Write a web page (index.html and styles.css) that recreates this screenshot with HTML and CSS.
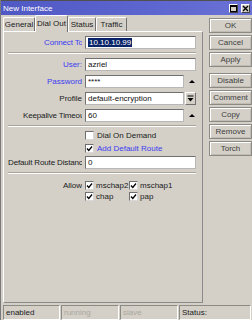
FILE: index.html
```html
<!DOCTYPE html>
<html lang="en">
<head>
    <meta charset="UTF-8">
    <title>New Interface</title>
    <link rel="stylesheet" href="styles.css">
</head>
<body>
    <div class="window">
        <!-- Title bar -->
        <div class="titlebar">
            <span class="title">New Interface</span>
            <span class="tb-btn">
                <svg width="7" height="7" viewBox="0 0 7 7"><rect x="0.5" y="0.5" width="6" height="6" fill="none" stroke="#000"/><line x1="0" y1="1.5" x2="7" y2="1.5" stroke="#000"/></svg>
            </span>
            <span class="tb-btn">
                <svg width="7" height="7" viewBox="0 0 7 7"><path d="M1 1 L6 6 M6 1 L1 6" stroke="#000" stroke-width="1.4"/></svg>
            </span>
        </div>

        <div class="content">
            <div class="main">
                <div class="tabs">
                    <span class="tab tab-general">General</span>
                    <span class="tab tab-dial active">Dial Out</span>
                    <span class="tab tab-status">Status</span>
                    <span class="tab tab-traffic">Traffic</span>
                </div>

                <div class="panel">
                    <div class="row row-first">
                        <span class="lbl blue"><span class="clip clip-connect">Connect To:</span></span>
                        <span class="field"><span class="selected">10.10.10.99</span></span>
                    </div>
                    <div class="sep"></div>

                    <div class="row">
                        <span class="lbl blue">User:</span>
                        <span class="field">azriel</span>
                    </div>
                    <div class="row">
                        <span class="lbl blue">Password</span>
                        <span class="field short">****</span>
                        <span class="arrow-up"></span>
                    </div>
                    <div class="row">
                        <span class="lbl">Profile</span>
                        <span class="field short">default-encryption</span>
                        <span class="drop-btn">
                            <svg width="7" height="7" viewBox="0 0 7 7"><line x1="0.5" y1="1" x2="6.5" y2="1" stroke="#000"/><path d="M0.5 3 L6.5 3 L3.5 6.5 Z" fill="#000"/></svg>
                        </span>
                    </div>
                    <div class="row">
                        <span class="lbl"><span class="clip clip-keepalive">Keepalive Timeout:</span></span>
                        <span class="field short">60</span>
                        <span class="arrow-up"></span>
                    </div>
                    <div class="sep"></div>

                    <div class="check-row">
                        <span class="box"></span>
                        <span>Dial On Demand</span>
                    </div>
                    <div class="check-row">
                        <span class="box checked"></span>
                        <span class="blue">Add Default Route</span>
                    </div>
                    <div class="row row-tight">
                        <span class="lbl"><span class="clip clip-distance">Default Route Distance:</span></span>
                        <span class="field">0</span>
                    </div>
                    <div class="sep"></div>

                    <div class="allow">
                        <span class="lbl">Allow</span>
                        <div class="allow-grid">
                            <span class="opt"><span class="box checked"></span>mschap2</span>
                            <span class="opt"><span class="box checked"></span>mschap1</span>
                            <span class="opt"><span class="box checked"></span>chap</span>
                            <span class="opt"><span class="box checked"></span>pap</span>
                        </div>
                    </div>
                </div>
            </div>

            <!-- Buttons -->
            <div class="side">
                <span class="btn">OK</span>
                <span class="btn">Cancel</span>
                <span class="btn">Apply</span>
                <span class="btn btn-gap">Disable</span>
                <span class="btn">Comment</span>
                <span class="btn">Copy</span>
                <span class="btn">Remove</span>
                <span class="btn">Torch</span>
            </div>
        </div>

        <!-- Status bar -->
        <div class="statusbar">
            <span class="cell cell-enabled">enabled</span>
            <span class="cell cell-running off">running</span>
            <span class="cell cell-slave off">slave</span>
            <span class="cell cell-status">Status:</span>
        </div>
    </div>
</body>
</html>
```

FILE: styles.css
```css
/* Base */
:root {
    --face: #d4d0c8;
    --shadow: #808080;
    --blue: #3c3cf0;
}

html, body {
    margin: 0;
    padding: 0;
}

body {
    font-family: 'Liberation Sans', Arial, sans-serif;
    font-size: 8px;
    color: #202020;
    background: var(--face);
}

.window {
    width: 252px;
    height: 320px;
    box-sizing: border-box;
    border-left: 1px solid #7a7a7a;
    background: var(--face);
    display: flex;
    flex-direction: column;
    overflow: hidden;
}

/* Title bar */
.titlebar {
    height: 15px;
    box-sizing: border-box;
    border-top: 1px solid #505050;
    background: linear-gradient(90deg, #5058c4, #5d66cf 60%, #6a72d6);
    display: flex;
    align-items: center;
    padding: 0 2px 0 2px;
    gap: 3px;
}

.title {
    color: #fff;
    flex: 1;
    line-height: 13px;
}

.tb-btn {
    width: 9px;
    height: 9px;
    box-sizing: border-box;
    background: var(--face);
    border: 1px solid;
    border-color: #fff #404040 #404040 #fff;
    display: flex;
    align-items: center;
    justify-content: center;
}

.tb-btn svg {
    display: block;
}

/* Content */
.content {
    display: flex;
    height: 289px;
}

.main {
    padding: 2px 0 0 2px;
    width: 201px;
}

.tabs {
    display: flex;
    height: 14px;
}

.tab {
    box-sizing: border-box;
    height: 14px;
    border: 1px solid;
    border-color: #fff #707070 transparent #fff;
    border-bottom: none;
    border-radius: 2px 2px 0 0;
    line-height: 13px;
    text-align: center;
    color: #202020;
}

.tab-general { width: 32px; }
.tab-dial { width: 33px; }
.tab-status { width: 28px; }
.tab-traffic { width: 31px; }

.tab.active {
    height: 17px;
    margin-top: -2px;
    line-height: 15px;
    background: var(--face);
    position: relative;
    z-index: 1;
}

.panel {
    height: 272px;
    box-sizing: border-box;
    border: 1px solid;
    border-color: #fff #8a8a8a #8a8a8a #fff;
    padding: 4px 5px 0 4px;
}

/* Form rows */
.row {
    display: flex;
    align-items: center;
    height: 13px;
    margin-top: 4px;
}

.row-first {
    margin-top: 0;
}

.row-tight {
    margin-top: 1px;
}

.lbl {
    width: 74px;
    margin-right: 3px;
    text-align: right;
    white-space: nowrap;
    overflow: hidden;
    flex-shrink: 0;
}

.clip {
    display: inline-block;
    overflow: hidden;
    white-space: nowrap;
    text-align: left;
    vertical-align: top;
    letter-spacing: -0.15px;
}

.clip-connect { width: 38px; }
.clip-keepalive { width: 59px; }
.clip-distance { width: 74px; }

.blue {
    color: var(--blue);
}

.field {
    width: 111px;
    height: 13px;
    box-sizing: border-box;
    background: #fff;
    border: 1px solid;
    border-color: #707070 #b8b8b8 #b8b8b8 #707070;
    padding-left: 2px;
    line-height: 11px;
    white-space: nowrap;
    overflow: hidden;
    color: #101010;
}

.field.short {
    width: 99px;
}

.selected {
    background: #0a246a;
    color: #fff;
    padding: 0 1px;
}

.arrow-up {
    width: 0;
    height: 0;
    margin-left: 5px;
    border-left: 3px solid transparent;
    border-right: 3px solid transparent;
    border-bottom: 3px solid #000;
}

.drop-btn {
    width: 11px;
    height: 13px;
    box-sizing: border-box;
    margin-left: 1px;
    border: 1px solid;
    border-color: #fff #707070 #707070 #fff;
    display: flex;
    align-items: center;
    justify-content: center;
}

.sep {
    height: 0;
    border-top: 1px solid #a8a49c;
    border-bottom: 1px solid #fff;
    margin: 3px 1px 2px 0;
}

/* Checkboxes */
.check-row {
    display: flex;
    align-items: center;
    height: 13px;
    padding-left: 77px;
    gap: 3px;
}

.box {
    width: 9px;
    height: 9px;
    box-sizing: border-box;
    background: #fff;
    border: 1px solid;
    border-color: #707070 #d8d8d8 #d8d8d8 #707070;
    flex-shrink: 0;
}

.box.checked {
    background: #fff url("data:image/svg+xml,%3Csvg xmlns='http://www.w3.org/2000/svg' width='7' height='7'%3E%3Cpath d='M1 3.5 L2.8 5.5 L6 1.5' fill='none' stroke='%23000' stroke-width='1.3'/%3E%3C/svg%3E") no-repeat center;
}

.allow {
    display: flex;
    margin-top: 6px;
}

.allow .lbl {
    line-height: 11px;
}

.allow-grid {
    display: grid;
    grid-template-columns: 44px 50px;
    row-gap: 0;
}

.opt {
    display: flex;
    align-items: center;
    height: 11px;
    gap: 2px;
}

/* Side buttons */
.side {
    display: flex;
    flex-direction: column;
    gap: 2px;
    padding-top: 3px;
    margin-left: 6px;
}

.btn {
    width: 43px;
    height: 15px;
    box-sizing: border-box;
    border: 1px solid #8c8a84;
    box-shadow: inset 1px 1px #fff, inset -1px -1px #c0bcb4;
    text-align: center;
    line-height: 13px;
    color: #404040;
}

.btn-gap {
    margin-top: 4px;
}

/* Status bar */
.statusbar {
    display: flex;
    gap: 1px;
    padding: 1px 1px 0 2px;
}

.cell {
    height: 15px;
    box-sizing: border-box;
    border: 1px solid;
    border-color: #8c8a84 #fff #fff #8c8a84;
    padding-left: 2px;
    line-height: 13px;
}

.cell-enabled { width: 57px; }
.cell-running { width: 58px; }
.cell-slave { width: 58px; }
.cell-status { flex: 1; }

.off {
    color: #aaa69e;
}
```
